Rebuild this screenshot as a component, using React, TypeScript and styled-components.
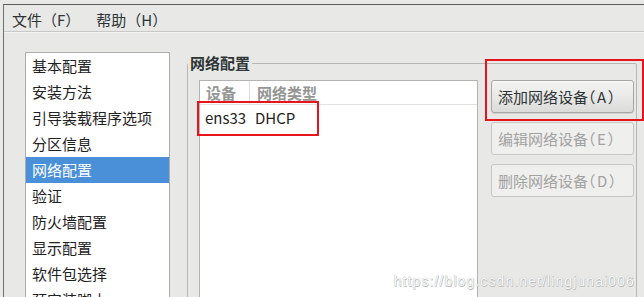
import React from "react";
import styled, { createGlobalStyle } from "styled-components";

const GlobalStyle = createGlobalStyle`
  html, body {
    margin: 0;
    padding: 0;
    overflow: hidden;
    background: #e8e8e7;
  }
  body {
    font-family: "Noto Sans CJK SC", "Noto Sans", sans-serif;
    color: #2e3436;
  }
`;

const Screen = styled.div`
  height: 297px;
  padding: 4px 0 0 3px;
  box-sizing: border-box;
  background: #e9e9e8;
  overflow: hidden;
`;

const Window = styled.div`
  height: 100%;
  border-top: 1px solid #595d59;
  border-left: 1px solid #6e726e;
  background: #e8e8e7;
  display: flex;
  flex-direction: column;
  position: relative;
`;

const MenuBar = styled.div`
  height: 27px;
  box-sizing: border-box;
  padding-top: 2px;
  display: flex;
  border-bottom: 1px solid #c8c8c7;
  box-shadow: 0 1px 0 #f2f2f1;
  flex-shrink: 0;
`;

const MenuItem = styled.div`
  padding: 0 8px;
  font-size: 15px;
  line-height: 25px;
  color: #2e3436;
`;

const Content = styled.div`
  flex: 1;
  display: flex;
  align-items: flex-start;
  padding: 20px 7px 0 21px;
  gap: 17px;
  min-height: 0;
`;

const SideList = styled.div`
  width: 145px;
  height: 300px;
  box-sizing: border-box;
  border: 1px solid #acacab;
  background: #ffffff;
  flex-shrink: 0;
`;

const SideItem = styled.div<{ $selected?: boolean }>`
  height: 26px;
  line-height: 26px;
  padding-left: 6px;
  font-size: 15px;
  white-space: nowrap;
  background: ${(p) => (p.$selected ? "#4a90d9" : "transparent")};
  color: ${(p) => (p.$selected ? "#ffffff" : "#1f2224")};
`;

const Frame = styled.fieldset`
  flex: 1;
  margin: 0;
  padding: 0;
  height: 300px;
  box-sizing: border-box;
  border: 1px solid #b6b6b5;
  border-radius: 2px;
  min-width: 0;
`;

const FrameTitle = styled.legend`
  padding: 0 2px;
  margin-left: 0;
  font-size: 15px;
  font-weight: bold;
  line-height: 22px;
  color: #2e3436;
`;

const FrameBody = styled.div`
  display: flex;
  align-items: flex-start;
  gap: 13px;
  padding: 6px 2px 0 11px;
`;

const TreeWrap = styled.div`
  position: relative;
  width: 279px;
  flex-shrink: 0;
`;

const TreeView = styled.div`
  height: 230px;
  box-sizing: border-box;
  border: 1px solid #b3b3b2;
  background: #ffffff;
`;

const HeaderRow = styled.div`
  display: flex;
  height: 24px;
  box-sizing: border-box;
  border-bottom: 1px solid #e2e2e1;
`;

const HeaderCell = styled.div<{ $w?: number }>`
  width: ${(p) => (p.$w ? `${p.$w}px` : "auto")};
  flex: ${(p) => (p.$w ? "none" : "1")};
  box-sizing: border-box;
  padding-left: ${(p) => (p.$w ? "6px" : "7px")};
  border-right: ${(p) => (p.$w ? "1px solid #dcdcdb" : "none")};
  font-size: 15px;
  line-height: 23px;
  color: #959594;
  font-weight: bold;
`;

const DataRow = styled.div`
  display: flex;
  height: 26px;
  align-items: center;
`;

const DataCell = styled.div<{ $w?: number }>`
  width: ${(p) => (p.$w ? `${p.$w}px` : "auto")};
  box-sizing: border-box;
  padding-left: ${(p) => (p.$w ? "5px" : "6px")};
  font-size: 15px;
  line-height: 26px;
  color: #1f2224;
`;

const RedMark = styled.div<{ $l: number; $t: number; $w: number; $h: number }>`
  position: absolute;
  left: ${(p) => p.$l}px;
  top: ${(p) => p.$t}px;
  width: ${(p) => p.$w}px;
  height: ${(p) => p.$h}px;
  box-sizing: border-box;
  border: 2px solid #e8141c;
  pointer-events: none;
`;

const ButtonCol = styled.div`
  position: relative;
  display: flex;
  flex-direction: column;
  gap: 9px;
  width: 144px;
`;

const ActionButton = styled.div<{ $disabled?: boolean }>`
  height: 33px;
  box-sizing: border-box;
  padding-left: 6px;
  border-radius: 3px;
  border: 1px solid ${(p) => (p.$disabled ? "#c6c6c5" : "#a6a6a5")};
  background: ${(p) =>
    p.$disabled
      ? "#efefee"
      : "linear-gradient(to bottom, #f3f3f2 0%, #e9e9e8 50%, #dbdbda 100%)"};
  box-shadow: ${(p) =>
    p.$disabled ? "none" : "inset 0 1px 0 #fbfbfb, 0 1px 0 #d0d0cf"};
  font-size: 15px;
  line-height: 31px;
  white-space: nowrap;
  font-feature-settings: "halt";
  color: ${(p) => (p.$disabled ? "#a2a2a1" : "#2e3436")};
`;

const Paren = styled.span`
  letter-spacing: 1.5px;
`;

const Watermark = styled.div`
  position: absolute;
  right: 9px;
  bottom: 9px;
  font-family: "Liberation Sans", Arial, sans-serif;
  font-size: 14px;
  letter-spacing: 1.1px;
  color: #fafafa;
  text-shadow: 0 0 1px #a0a0a0, 0.5px 0.5px 0 #c0c0c0;
  pointer-events: none;
  white-space: nowrap;
`;

const sideItems = [
  "基本配置",
  "安装方法",
  "引导装载程序选项",
  "分区信息",
  "网络配置",
  "验证",
  "防火墙配置",
  "显示配置",
  "软件包选择",
  "预安装脚本",
  "安装后脚本",
];

const buttons = [
  { name: "添加网络设备", key: "A", disabled: false },
  { name: "编辑网络设备", key: "E", disabled: true },
  { name: "删除网络设备", key: "D", disabled: true },
];

export default function App() {
  return (
    <>
      <GlobalStyle />
      <Screen>
        <Window>
          <MenuBar>
            <MenuItem>文件（F）</MenuItem>
            <MenuItem>帮助（H）</MenuItem>
          </MenuBar>
          <Content>
            <SideList>
              {sideItems.map((item) => (
                <SideItem key={item} $selected={item === "网络配置"}>
                  {item}
                </SideItem>
              ))}
            </SideList>
            <Frame>
              <FrameTitle>网络配置</FrameTitle>
              <FrameBody>
                <TreeWrap>
                  <TreeView>
                    <HeaderRow>
                      <HeaderCell $w={50}>设备</HeaderCell>
                      <HeaderCell>网络类型</HeaderCell>
                    </HeaderRow>
                    <DataRow>
                      <DataCell $w={49}>ens33</DataCell>
                      <DataCell>DHCP</DataCell>
                    </DataRow>
                  </TreeView>
                  <RedMark $l={-2} $t={21} $w={122} $h={35} />
                </TreeWrap>
                <ButtonCol>
                  {buttons.map((b) => (
                    <ActionButton key={b.key} $disabled={b.disabled}>
                      {b.name}
                      <Paren>（</Paren>
                      <Paren>{b.key}</Paren>）
                    </ActionButton>
                  ))}
                  <RedMark $l={-6} $t={-21} $w={159} $h={62} />
                </ButtonCol>
              </FrameBody>
            </Frame>
          </Content>
          <Watermark>https://blog.csdn.net/lingjunai006</Watermark>
        </Window>
      </Screen>
    </>
  );
}
